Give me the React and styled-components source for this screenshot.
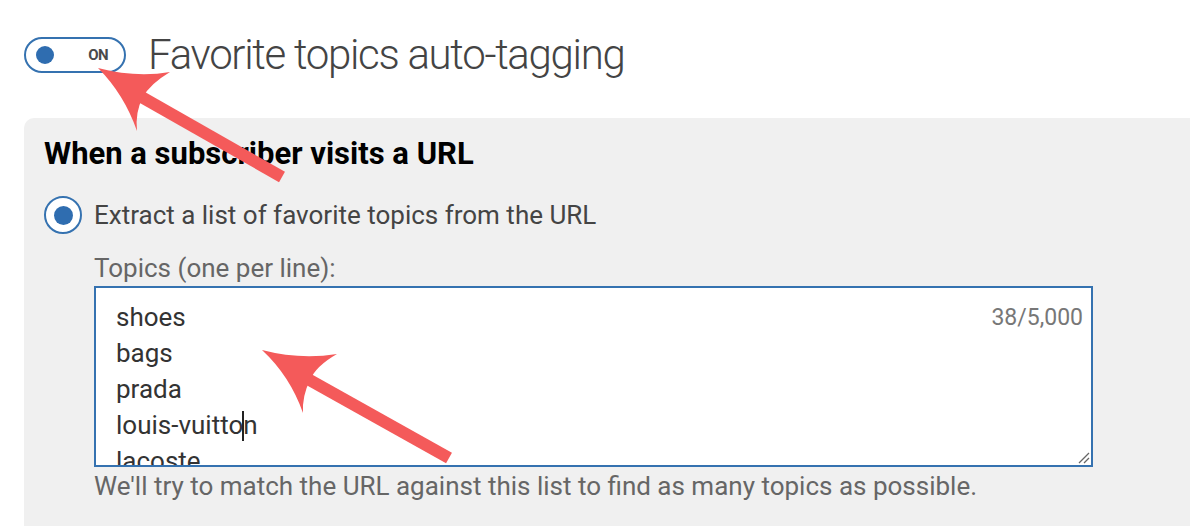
import styled, { createGlobalStyle } from "styled-components";

const GlobalStyle = createGlobalStyle`
  html, body {
    margin: 0;
    padding: 0;
    background: #ffffff;
  }
  body {
    font-family: Roboto, "Liberation Sans", sans-serif;
    color: #444444;
  }
`;

const Page = styled.div`
  position: relative;
  width: 1190px;
  height: 526px;
  overflow: hidden;
`;

const Header = styled.div`
  display: flex;
  align-items: center;
  gap: 22px;
  padding: 37px 0 0 24px;
  height: 36px;
`;

const Toggle = styled.div`
  box-sizing: border-box;
  width: 102px;
  height: 36px;
  border: 2px solid #3572b0;
  border-radius: 18px;
  display: flex;
  align-items: center;
  justify-content: space-between;
  padding: 0 16px 0 10px;
`;

const Knob = styled.span`
  width: 18px;
  height: 18px;
  border-radius: 50%;
  background: #2f6db0;
`;

const ToggleLabel = styled.span`
  font-size: 15px;
  font-weight: 700;
  color: #4a4a4a;
  letter-spacing: -0.6px;
`;

const Title = styled.h1`
  margin: 0;
  font-size: 42px;
  font-weight: 300;
  color: #444444;
  letter-spacing: -1.3px;
  line-height: 50px;
`;

const Panel = styled.section`
  margin: 45px 0 0 24px;
  background: #f0f0f0;
  border-top-left-radius: 10px;
  padding: 18px 0 60px 20px;
`;

const Heading = styled.h2`
  margin: 0;
  font-size: 31px;
  font-weight: 700;
  color: #000000;
  line-height: 36px;
`;

const RadioRow = styled.label`
  display: flex;
  align-items: center;
  gap: 12px;
  margin-top: 24px;
  font-size: 26px;
  color: #444444;
`;

const Radio = styled.span`
  box-sizing: border-box;
  width: 38px;
  height: 38px;
  border: 2px solid #3572b0;
  border-radius: 50%;
  background: #ffffff;
  display: flex;
  align-items: center;
  justify-content: center;
  &::after {
    content: "";
    width: 19px;
    height: 19px;
    border-radius: 50%;
    background: #2f6db0;
  }
`;

const Indent = styled.div`
  margin-left: 50px;
`;

const FieldLabel = styled.div`
  margin-top: 19px;
  font-size: 26px;
  line-height: 30px;
  color: #666666;
`;

const TextBox = styled.div`
  position: relative;
  box-sizing: border-box;
  width: 999px;
  height: 181px;
  margin-top: 3px;
  border: 2px solid #3572b0;
  background: #ffffff;
  padding: 11px 0 0 20px;
  overflow: hidden;
`;

const Line = styled.div`
  font-size: 26px;
  line-height: 36px;
  color: #333333;
`;

const Caret = styled.span`
  display: inline-block;
  width: 2px;
  height: 30px;
  margin: 0 -1px;
  vertical-align: -7px;
  background: #222222;
`;

const Counter = styled.span`
  position: absolute;
  top: 16px;
  right: 8px;
  font-size: 23px;
  color: #777777;
`;

const Grip = styled.svg`
  position: absolute;
  right: 1px;
  bottom: 1px;
`;

const Hint = styled.div`
  margin-top: 4px;
  font-size: 26px;
  line-height: 30px;
  color: #666666;
`;

const Annotations = styled.svg`
  position: absolute;
  left: 0;
  top: 0;
  pointer-events: none;
`;

const topics = ["shoes", "bags", "prada", "louis-vuitton", "lacoste"];

function Arrow({ head, shaft }) {
  return (
    <g fill="#f45a5a" stroke="none">
      <line
        x1={shaft[0]}
        y1={shaft[1]}
        x2={shaft[2]}
        y2={shaft[3]}
        stroke="#f45a5a"
        strokeWidth="12"
      />
      <path d={head} />
    </g>
  );
}

export default function App() {
  return (
    <>
      <GlobalStyle />
      <Page>
        <Header>
          <Toggle>
            <Knob />
            <ToggleLabel>ON</ToggleLabel>
          </Toggle>
          <Title>Favorite topics auto-tagging</Title>
        </Header>

        <Panel>
          <Heading>When a subscriber visits a URL</Heading>
          <RadioRow>
            <Radio />
            Extract a list of favorite topics from the URL
          </RadioRow>
          <Indent>
            <FieldLabel>Topics (one per line):</FieldLabel>
            <TextBox>
              {topics.map((t) =>
                t === "louis-vuitton" ? (
                  <Line key={t}>
                    louis-vuitto
                    <Caret />n
                  </Line>
                ) : (
                  <Line key={t}>{t}</Line>
                )
              )}
              <Counter>38/5,000</Counter>
              <Grip width="14" height="14" viewBox="0 0 14 14">
                <path
                  d="M3 13 L13 3 M8 13 L13 8"
                  stroke="#666"
                  strokeWidth="1.3"
                  fill="none"
                />
              </Grip>
            </TextBox>
            <Hint>
              We'll try to match the URL against this list to find as many
              topics as possible.
            </Hint>
          </Indent>
        </Panel>

        <Annotations width="1190" height="526" viewBox="0 0 1190 526">
          <Arrow
            shaft={[138, 95, 282, 177]}
            head="M98 68 Q136 78 170 72 Q150 84 143 97 Q135 112 137 131 Q124 94 98 68 Z"
          />
          <Arrow
            shaft={[306, 378, 449, 458]}
            head="M262 350 Q300 360 337 354 Q316 366 310 380 Q302 396 303 413 Q290 376 262 350 Z"
          />
        </Annotations>
      </Page>
    </>
  );
}
